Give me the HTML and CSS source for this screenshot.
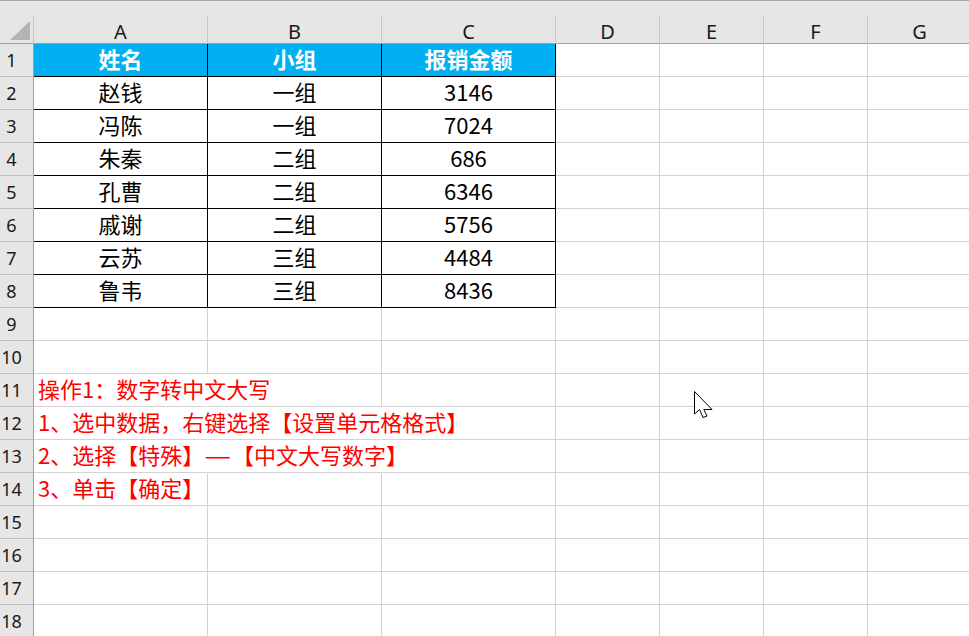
FILE: index.html
```html
<!DOCTYPE html>
<html lang="zh">
    <head>
        <meta charset="UTF-8" />
        <title>数字转中文大写</title>
        <link rel="stylesheet" href="styles.css">
    </head>
    <body>
        <div class="topbar"></div>

        <!-- worksheet -->
        <div class="sheet">
            <div class="corner">
                <svg width="20" height="19" viewBox="0 0 20 19"><polygon points="0,19 20,0 20,19" fill="#b4b4b4" /></svg>
            </div>
            <div class="col-name">A</div>
            <div class="col-name">B</div>
            <div class="col-name">C</div>
            <div class="col-name">D</div>
            <div class="col-name">E</div>
            <div class="col-name">F</div>
            <div class="col-name">G</div>

            <div class="row-num">1</div>
            <div class="cell boxed title">姓名</div>
            <div class="cell boxed title">小组</div>
            <div class="cell boxed title">报销金额</div>
            <div class="cell"></div><div class="cell"></div><div class="cell"></div><div class="cell"></div>

            <div class="row-num">2</div>
            <div class="cell boxed">赵钱</div>
            <div class="cell boxed">一组</div>
            <div class="cell boxed">3146</div>
            <div class="cell"></div><div class="cell"></div><div class="cell"></div><div class="cell"></div>

            <div class="row-num">3</div>
            <div class="cell boxed">冯陈</div>
            <div class="cell boxed">一组</div>
            <div class="cell boxed">7024</div>
            <div class="cell"></div><div class="cell"></div><div class="cell"></div><div class="cell"></div>

            <div class="row-num">4</div>
            <div class="cell boxed">朱秦</div>
            <div class="cell boxed">二组</div>
            <div class="cell boxed">686</div>
            <div class="cell"></div><div class="cell"></div><div class="cell"></div><div class="cell"></div>

            <div class="row-num">5</div>
            <div class="cell boxed">孔曹</div>
            <div class="cell boxed">二组</div>
            <div class="cell boxed">6346</div>
            <div class="cell"></div><div class="cell"></div><div class="cell"></div><div class="cell"></div>

            <div class="row-num">6</div>
            <div class="cell boxed">戚谢</div>
            <div class="cell boxed">二组</div>
            <div class="cell boxed">5756</div>
            <div class="cell"></div><div class="cell"></div><div class="cell"></div><div class="cell"></div>

            <div class="row-num">7</div>
            <div class="cell boxed">云苏</div>
            <div class="cell boxed">三组</div>
            <div class="cell boxed">4484</div>
            <div class="cell"></div><div class="cell"></div><div class="cell"></div><div class="cell"></div>

            <div class="row-num">8</div>
            <div class="cell boxed">鲁韦</div>
            <div class="cell boxed">三组</div>
            <div class="cell boxed">8436</div>
            <div class="cell"></div><div class="cell"></div><div class="cell"></div><div class="cell"></div>

            <div class="row-num">9</div>
            <div class="cell"></div><div class="cell"></div><div class="cell"></div><div class="cell"></div>
            <div class="cell"></div><div class="cell"></div><div class="cell"></div>

            <div class="row-num">10</div>
            <div class="cell"></div><div class="cell"></div><div class="cell"></div><div class="cell"></div>
            <div class="cell"></div><div class="cell"></div><div class="cell"></div>

            <!-- notes spill over the next cells, so those gridlines are hidden -->
            <div class="row-num">11</div>
            <div class="cell note spill">操作1：数字转中文大写</div>
            <div class="cell"></div><div class="cell"></div><div class="cell"></div>
            <div class="cell"></div><div class="cell"></div><div class="cell"></div>

            <div class="row-num">12</div>
            <div class="cell note spill">1、选中数据，右键选择【设置单元格格式】</div>
            <div class="cell spill"></div><div class="cell"></div><div class="cell"></div>
            <div class="cell"></div><div class="cell"></div><div class="cell"></div>

            <div class="row-num">13</div>
            <div class="cell note spill">2、选择【特殊】<span class="dash">—</span>【中文大写数字】</div>
            <div class="cell spill"></div><div class="cell"></div><div class="cell"></div>
            <div class="cell"></div><div class="cell"></div><div class="cell"></div>

            <div class="row-num">14</div>
            <div class="cell note">3、单击【确定】</div>
            <div class="cell"></div><div class="cell"></div><div class="cell"></div>
            <div class="cell"></div><div class="cell"></div><div class="cell"></div>

            <div class="row-num">15</div>
            <div class="cell"></div><div class="cell"></div><div class="cell"></div><div class="cell"></div>
            <div class="cell"></div><div class="cell"></div><div class="cell"></div>

            <div class="row-num">16</div>
            <div class="cell"></div><div class="cell"></div><div class="cell"></div><div class="cell"></div>
            <div class="cell"></div><div class="cell"></div><div class="cell"></div>

            <div class="row-num">17</div>
            <div class="cell"></div><div class="cell"></div><div class="cell"></div><div class="cell"></div>
            <div class="cell"></div><div class="cell"></div><div class="cell"></div>

            <div class="row-num">18</div>
            <div class="cell"></div><div class="cell"></div><div class="cell"></div><div class="cell"></div>
            <div class="cell"></div><div class="cell"></div><div class="cell"></div>
        </div>

        <!-- mouse pointer -->
        <svg class="pointer" width="20" height="28" viewBox="0 0 20 28">
            <polygon points="0.5,0.5 0.5,23 5.5,18.5 9,26.5 13,25 9.8,18.5 18,18.5" fill="#ffffff" stroke="#000000" stroke-width="1" stroke-linejoin="miter" />
        </svg>
    </body>
</html>
```

FILE: styles.css
```css
* {
    box-sizing: border-box;
}

body {
    margin: 0;
    overflow: hidden;
    background-color: #ffffff;
    font-family: "Noto Sans CJK SC", sans-serif;
    position: relative;
}

.topbar {
    width: 972px;
    height: 16px;
    background-color: #e6e6e6;
    border-top: 1px solid #a6a6a6;
}

.sheet {
    display: grid;
    grid-template-columns: 34px repeat(3, 174px) repeat(4, 104px);
    grid-template-rows: 28px;
    grid-auto-rows: 33px;
    width: 972px;
}

.corner {
    display: flex;
    justify-content: flex-end;
    align-items: flex-end;
    padding: 0 3px 3px 0;
    background-color: #e6e6e6;
    border-right: 1px solid #c6c6c6;
    border-bottom: 1px solid #a0a0a0;
}

.col-name {
    display: flex;
    justify-content: center;
    align-items: center;
    padding-top: 3px;
    background-color: #e6e6e6;
    border-right: 1px solid #c6c6c6;
    border-bottom: 1px solid #a0a0a0;
    font-family: "Noto Sans", sans-serif;
    font-size: 20px;
    color: #1a1a1a;
}

.row-num {
    display: flex;
    justify-content: center;
    align-items: center;
    padding-right: 10px;
    background-color: #e6e6e6;
    border-right: 1px solid #a0a0a0;
    border-bottom: 1px solid #c0c0c0;
    font-family: "Noto Sans", sans-serif;
    font-size: 18px;
    color: #1a1a1a;
}

.cell {
    display: flex;
    justify-content: center;
    align-items: center;
    padding-bottom: 4px;
    white-space: nowrap;
    border-right: 1px solid #d4d4d4;
    border-bottom: 1px solid #d4d4d4;
    font-size: 22px;
    color: #000000;
}

.cell.boxed {
    border-right-color: #000000;
    border-bottom-color: #000000;
}

.cell.title {
    background-color: #00b0f0;
    color: #ffffff;
    font-weight: bold;
}

.cell.note {
    justify-content: flex-start;
    padding-left: 4px;
    color: #ff0000;
}

.cell.spill {
    border-right-color: transparent;
}

.dash {
    display: inline-block;
    margin: 0 4px;
    transform: scaleX(1.35);
}

.pointer {
    position: absolute;
    left: 694px;
    top: 391px;
}
```
